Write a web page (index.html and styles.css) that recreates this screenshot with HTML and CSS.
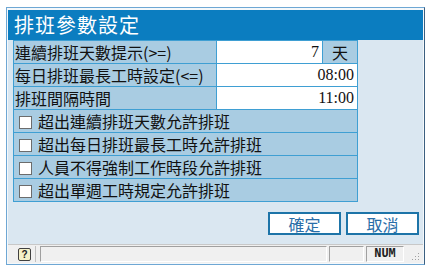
FILE: index.html
```html
<html lang="zh-Hant">

<head>
    <meta charset="UTF-8">
    <meta name="viewport" content="width=device-width, initial-scale=1.0">
    <title>排班參數設定</title>
    <link rel="stylesheet" href="styles.css">
</head>

<body>
    <div class="dialog">
        <div class="title">排班參數設定</div>

        <div class="main">
            <table class="grid">
                <tr>
                    <td class="label">連續排班天數提示(&gt;=)</td>
                    <td class="value">7</td>
                    <td class="unit">天</td>
                </tr>
                <tr>
                    <td class="label">每日排班最長工時設定(&lt;=)</td>
                    <td class="value" colspan="2">08:00</td>
                </tr>
                <tr>
                    <td class="label">排班間隔時間</td>
                    <td class="value" colspan="2">11:00</td>
                </tr>
                <tr>
                    <td class="label check" colspan="3"><span class="box"></span>超出連續排班天數允許排班</td>
                </tr>
                <tr>
                    <td class="label check" colspan="3"><span class="box"></span>超出每日排班最長工時允許排班</td>
                </tr>
                <tr>
                    <td class="label check" colspan="3"><span class="box"></span>人員不得強制工作時段允許排班</td>
                </tr>
                <tr>
                    <td class="label check" colspan="3"><span class="box"></span>超出單週工時規定允許排班</td>
                </tr>
            </table>

            <div class="buttons">
                <button class="btn">確定</button>
                <button class="btn">取消</button>
            </div>
        </div>

        <div class="status">
            <div class="help"><span class="help-icon">?</span></div>
            <div class="panel wide"></div>
            <div class="panel mid"></div>
            <div class="panel num">NUM</div>
            <div class="grip">
                <svg width="12" height="12" viewBox="0 0 12 12">
                    <rect x="9" y="3" width="1" height="1" fill="#a0a0a0" />
                    <rect x="6" y="6" width="1" height="1" fill="#a0a0a0" />
                    <rect x="9" y="6" width="1" height="1" fill="#a0a0a0" />
                    <rect x="3" y="9" width="1" height="1" fill="#a0a0a0" />
                    <rect x="6" y="9" width="1" height="1" fill="#a0a0a0" />
                    <rect x="9" y="9" width="1" height="1" fill="#a0a0a0" />
                </svg>
            </div>
        </div>
    </div>
</body>

</html>
```

FILE: styles.css
```css
* {
    padding: 0;
    margin: 0;
    box-sizing: border-box;
}

body {
    background-color: #ffffff;
    font-family: "Noto Sans CJK TC", "Liberation Sans", sans-serif;
}

.dialog {
    margin: 7px 0 0 6px;
    width: 419px;
    height: 258px;
    border: 1px solid #6ea7d4;
    border-right-color: #3b5f80;
    padding: 2px 1px 1px 1px;
    background-color: #f4f8fb;
    display: flex;
    flex-direction: column;
}

.title {
    height: 30px;
    background-color: #0b7dc0;
    color: #ffffff;
    font-size: 20px;
    line-height: 30px;
    padding-left: 6px;
    letter-spacing: 1px;
}

.main {
    height: 205px;
    background-color: #dae7f1;
    padding: 0 4px 0 5px;
}

.grid {
    border-collapse: collapse;
    width: 345px;
    border: 1px solid #3f9fd3;
}

.grid td {
    height: 23px;
    border: 1px solid #3f9fd3;
    font-size: 16px;
    line-height: 20px;
    color: #111111;
    white-space: nowrap;
    padding: 0;
}

.label {
    width: 203px;
    background-color: #a9cce2;
    padding-left: 1px !important;
}

.value {
    background-color: #ffffff;
    text-align: right;
    font-family: "Liberation Serif", serif;
    font-size: 16px;
    padding-right: 3px !important;
}

.unit {
    width: 35px;
    background-color: #a9cce2;
    text-align: center;
}

.check {
    padding-left: 5px !important;
}

.box {
    display: inline-block;
    width: 13px;
    height: 13px;
    background-color: #ffffff;
    border: 1px solid #6c6c6c;
    vertical-align: -1px;
    margin-right: 6px;
}

.buttons {
    display: flex;
    justify-content: flex-end;
    gap: 5px;
    margin-top: 10px;
}

.btn {
    width: 73px;
    height: 23px;
    background-color: #ffffff;
    border: 2px solid #1d74a8;
    color: #2a6ea8;
    font-family: "Noto Sans CJK TC", sans-serif;
    font-size: 16px;
    line-height: 18px;
}

.status {
    height: 19px;
    background-color: #f0f0f0;
    border-top: 1px solid #c8c8c8;
    display: flex;
    align-items: center;
    padding: 1px 2px 1px 6px;
    gap: 2px;
}

.help {
    width: 22px;
    height: 16px;
    display: flex;
    align-items: center;
    justify-content: center;
    border-right: 1px solid #c0c0c0;
    margin-right: 2px;
}

.help-icon {
    width: 13px;
    height: 13px;
    border: 1px solid #404040;
    border-radius: 2px;
    background-color: #f4f0c8;
    font-family: "Liberation Sans", sans-serif;
    font-weight: 700;
    font-size: 10px;
    line-height: 11px;
    text-align: center;
    color: #202020;
}

.panel {
    height: 16px;
    border-top: 1px solid #a0a0a0;
    border-left: 1px solid #a0a0a0;
    border-right: 1px solid #ffffff;
    border-bottom: 1px solid #ffffff;
}

.wide {
    width: 287px;
}

.mid {
    width: 35px;
}

.num {
    width: 38px;
    font-family: "Liberation Mono", monospace;
    font-size: 12px;
    line-height: 14px;
    text-align: center;
    font-weight: 700;
    color: #202020;
}

.grip {
    width: 15px;
    height: 16px;
    display: flex;
    align-items: flex-end;
    justify-content: flex-end;
}
```
